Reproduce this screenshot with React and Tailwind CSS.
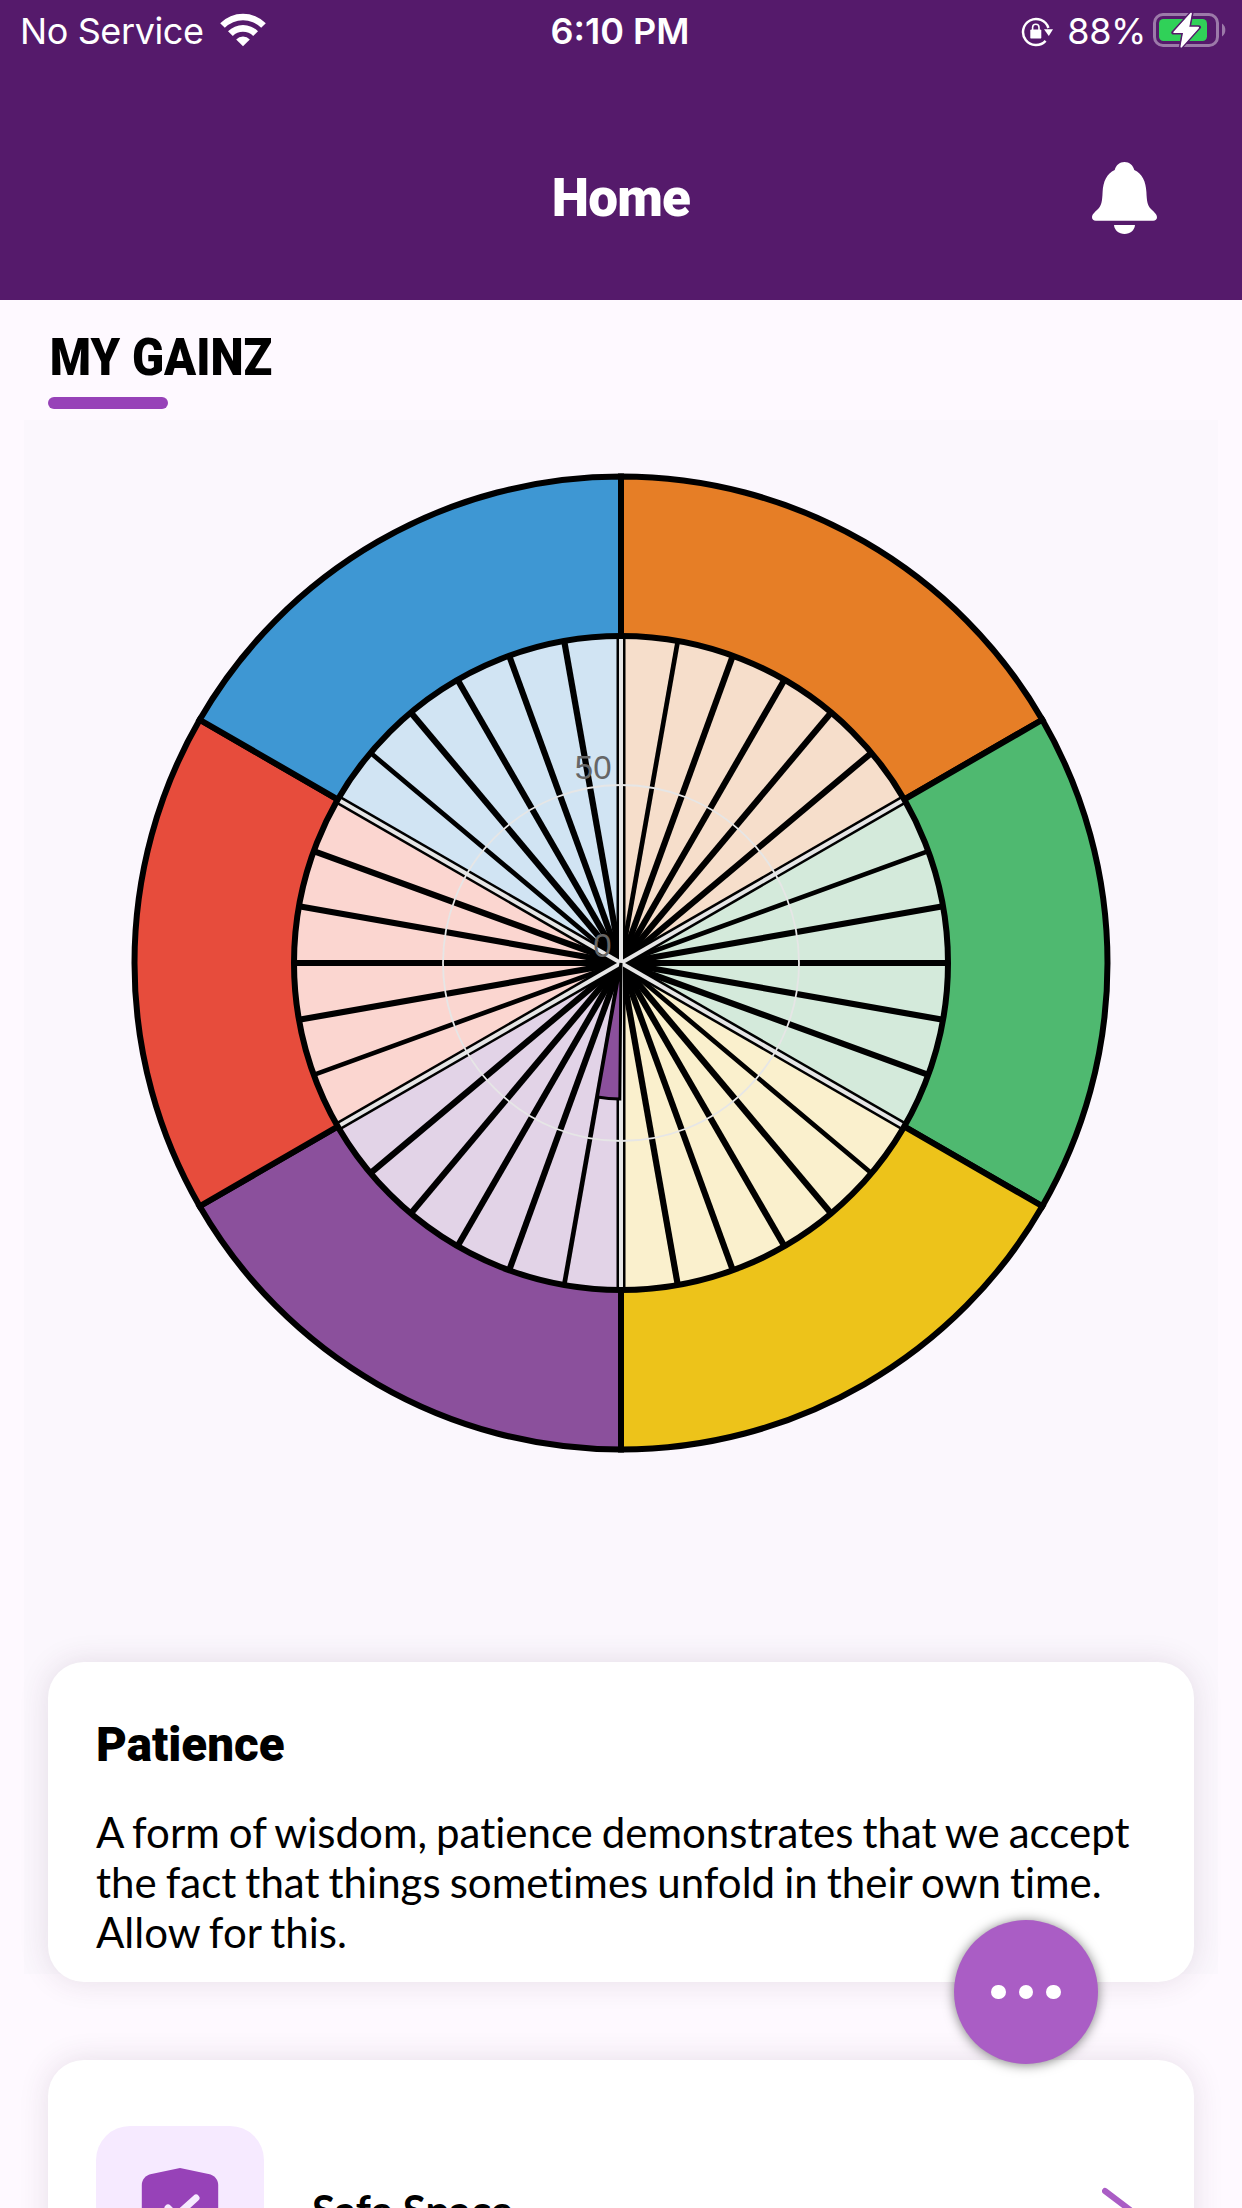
const CX = 597;
const CY = 543;
const R_OUTER = 486.5;
const R_INNER = 327;

const SECTORS = [
  { solid: "#e67e26", tint: "#f6decb" },
  { solid: "#4fb970", tint: "#d4eadb" },
  { solid: "#edc31a", tint: "#faf0cd" },
  { solid: "#8b509c", tint: "#e2d3e7" },
  { solid: "#e74c3c", tint: "#fbd6d0" },
  { solid: "#3e97d3", tint: "#d1e4f3" },
];

// Point on the wheel, with 0 degrees at the top, going clockwise.
function pt(r, deg) {
  const a = (deg * Math.PI) / 180;
  return [(CX + r * Math.sin(a)).toFixed(2), (CY - r * Math.cos(a)).toFixed(2)];
}

function wedge(r, from, to) {
  return `M${CX} ${CY}L${pt(r, from).join(" ")}A${r} ${r} 0 0 1 ${pt(r, to).join(" ")}Z`;
}

function Ray({ r0 = 0, r1, deg, color, width }) {
  const [x1, y1] = pt(r0, deg);
  const [x2, y2] = pt(r1, deg);
  return <line x1={x1} y1={y1} x2={x2} y2={y2} stroke={color} strokeWidth={width} />;
}

function GainzWheel() {
  const rays = Array.from({ length: 36 }, (_, i) => i * 10).filter((d) => d % 60 !== 0);
  return (
    <svg className="block h-[1242px] w-[1194px]" viewBox="0 0 1194 1242">
      {SECTORS.map((s, i) => (
        <path key={s.solid} d={wedge(R_OUTER, i * 60, i * 60 + 60)} fill={s.solid} stroke="#000" strokeWidth="6" />
      ))}
      {SECTORS.map((s, i) => (
        <path key={s.tint} d={wedge(R_INNER, i * 60, i * 60 + 60)} fill={s.tint} />
      ))}
      {rays.map((d) => (
        <Ray key={d} r1={R_INNER} deg={d} color="#000" width={d % 60 === 10 ? 4.7 : 6.2} />
      ))}
      {SECTORS.map((s, i) => (
        <Ray key={s.solid} r1={R_INNER} deg={i * 60} color="#000" width={9} />
      ))}
      <circle cx={CX} cy={CY} r="178" fill="none" stroke="#e6e6e6" strokeWidth="1.8" />
      {SECTORS.map((s, i) => (
        <Ray key={s.solid} r1={R_INNER - 2} deg={i * 60} color="#e6e6e6" width={4} />
      ))}
      <circle cx={CX} cy={CY} r={R_INNER} fill="none" stroke="#000" strokeWidth="6" />
      <path d={wedge(136, 180.5, 190)} fill="#8b509c" stroke="#000" strokeWidth="3" />
      <g fill="#666" textAnchor="end" fontSize="33" fontFamily="'Liberation Sans', Arial, sans-serif">
        <text x="587.5" y="359">50</text>
        <text x="587.5" y="537">0</text>
      </g>
    </svg>
  );
}

function WifiIcon() {
  return (
    <svg className="mt-[13px] h-[34px] w-[46px]" viewBox="0 0 46 34" fill="#fff">
      <path d="M.2 10.2A32.3 32.3 0 0 1 45.8 10.2L41.2 14.8A25.8 25.8 0 0 0 4.8 14.8Z" />
      <path d="M8 18.2A21.3 21.3 0 0 1 38 18.2L33.2 23A14.5 14.5 0 0 0 12.8 23Z" />
      <path d="M16.2 26.4A9.7 9.7 0 0 1 29.8 26.4L23 33.2Z" />
    </svg>
  );
}

function RotationLockIcon() {
  return (
    <svg className="mt-[17px] h-[30px] w-[32px]" viewBox="0 0 32 30">
      <path d="M27.4 11A13 13 0 1 0 24.6 23.8" fill="none" stroke="#fff" strokeWidth="2.5" />
      <path d="M23 12.2H32L27.8 19Z" fill="#fff" />
      <rect x="9.3" y="12.4" width="11" height="9.2" rx="1.2" fill="#fff" />
      <path d="M11.6 13V10.4A3.2 3.2 0 0 1 18 10.4V13" fill="none" stroke="#fff" strokeWidth="1.6" />
    </svg>
  );
}

function BatteryIcon() {
  return (
    <svg className="mt-3 h-[36px] w-[74px]" viewBox="0 0 74 36">
      <rect x="1.5" y="2.5" width="63" height="31" rx="8.5" fill="none" stroke="#fff" strokeOpacity=".42" strokeWidth="3" />
      <path d="M69 11.5A8 8 0 0 1 69 24.5Z" fill="#fff" fillOpacity=".42" />
      <rect x="6" y="7" width="48" height="22" rx="4.5" fill="#30d158" />
      <path
        d="M38.5 .8L20.3 20.6H30.5L27.8 35.4L46 15.2H35.8Z"
        fill="#fff"
        stroke="#551a6b"
        strokeWidth="4"
        strokeLinejoin="round"
        paintOrder="stroke"
      />
      <path d="M38 1.6L21.2 20.2H31L28.3 34.6L45.2 15.6H35.3Z" fill="#fff" stroke="#fff" strokeWidth="1.6" strokeLinejoin="round" />
    </svg>
  );
}

function BellIcon() {
  return (
    <svg className="h-[72px] w-[65px]" viewBox="0 0 65 72" fill="#fff">
      <path d="M32.5 0C37.4 0 41 3.2 42.3 8C50.2 11.6 53.9 19.5 54.4 30C54.8 39.5 55.5 43 58.5 46.5C61 49.3 65 51.8 65 55.3C65 57.3 63.4 58.8 61.2 58.8H3.8C1.6 58.8 0 57.3 0 55.3C0 51.8 4 49.3 6.5 46.5C9.5 43 10.2 39.5 10.6 30C11.1 19.5 14.8 11.6 22.7 8C24 3.2 27.6 0 32.5 0Z" />
      <path d="M22 63H43C42.6 68.2 38.2 72 32.5 72C26.8 72 22.4 68.2 22 63Z" />
    </svg>
  );
}

function ShieldIcon() {
  return (
    <svg className="h-[84px] w-[78px]" viewBox="0 0 78 84">
      <path
        d="M39 0L67.5 6C73.5 7.3 77.2 11.5 77.2 17V42C77.2 64 59 78 39 84C19 78 .8 64 .8 42V17C.8 11.5 4.5 7.3 10.5 6Z"
        fill="#9742b8"
      />
      <path d="M27 40L35 48L55 30" fill="none" stroke="#f6eaff" strokeWidth="7" strokeLinecap="round" strokeLinejoin="round" />
    </svg>
  );
}

export default function App() {
  return (
    <div className="relative h-[2208px] w-[1242px] overflow-hidden bg-[#fef9ff] font-['Lato',sans-serif] text-black">
      <header className="h-[300px] bg-[#551a6b] text-white">
        <div className="grid h-[62px] grid-cols-3 font-['Inter',sans-serif] text-[36px] leading-[63px]">
          <div className="flex items-start gap-4 pl-5">
            <span className="tracking-[-0.4px]">No Service</span>
            <WifiIcon />
          </div>
          <div className="pr-0.5 text-center font-semibold">6:10 PM</div>
          <div className="flex items-start justify-end pr-[15px]">
            <RotationLockIcon />
            <span className="ml-[14px] mr-[7px] tracking-[-0.4px]">88%</span>
            <BatteryIcon />
          </div>
        </div>
        <div className="grid h-[238px] grid-cols-3 items-center pt-[34px]">
          <h1 className="col-start-2 text-center font-['Roboto',sans-serif] text-[53px] font-black leading-none tracking-[-0.8px]">Home</h1>
          <div className="flex justify-end pr-[85px]">
            <BellIcon />
          </div>
        </div>
      </header>

      <section className="pt-5">
        <div className="px-12">
          <h2 className="origin-left scale-x-[0.925] pl-0.5 font-['Roboto',sans-serif] text-[51px] font-black leading-[75px]">MY GAINZ</h2>
          <div className="mt-0.5 h-3 w-[120px] rounded-full bg-[#9742b8]" />
        </div>
        <div className="mx-6 mt-[11px] h-[1554px] bg-[#fbf7fd]">
          <GainzWheel />
          <article className="relative mx-6 h-80 rounded-[36px] bg-white px-12 pt-[50px] shadow-[0_0_30px_rgba(70,40,70,0.13)]">
            <h3 className="font-['Roboto',sans-serif] text-[47.5px] font-black leading-[66px]">Patience</h3>
            <p className="mt-[29px] whitespace-nowrap text-[42px] leading-[50px] [font-variant-ligatures:none] [word-spacing:-1.7px]">
              A form of wisdom, patience demonstrates that we accept
              <br />
              the fact that things sometimes unfold in their own time.
              <br />
              Allow for this.
            </p>
          </article>
        </div>
      </section>

      <section className="mx-12 mt-[86px] flex h-[300px] items-center rounded-[36px] bg-white px-12 shadow-[0_0_30px_rgba(70,40,70,0.13)]">
        <div className="flex size-[168px] items-center justify-center rounded-[34px] bg-[#f6eaff]">
          <ShieldIcon />
        </div>
        <span className="ml-12 grow text-[42px] font-bold leading-[50px]">Safe Space</span>
        <svg className="mr-2 h-[46px] w-[36px]" viewBox="0 0 36 46">
          <path d="M3 4L28 23L3 42" fill="none" stroke="#aa5dc5" strokeWidth="6" strokeLinecap="round" strokeLinejoin="round" />
        </svg>
      </section>

      <button className="absolute left-[954px] top-[1920px] flex size-36 items-center justify-center gap-[13px] rounded-full bg-[#aa5dc5] shadow-[0_1px_12px_rgba(0,0,0,0.5)]">
        <span className="size-[14.5px] rounded-full bg-white" />
        <span className="size-[14.5px] rounded-full bg-white" />
        <span className="size-[14.5px] rounded-full bg-white" />
      </button>
    </div>
  );
}
